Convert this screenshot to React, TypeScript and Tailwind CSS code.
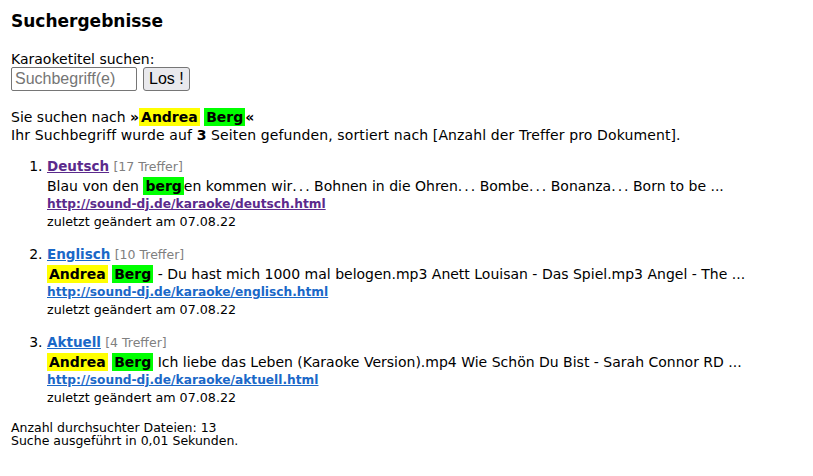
const Y = ({ children }: { children: React.ReactNode }) => (
  <span className="bg-[#ffff00] px-[2px] py-[1px] font-bold">{children}</span>
);
const G = ({ children }: { children: React.ReactNode }) => (
  <span className="bg-[#00ff00] px-[2px] py-[1px] font-bold">{children}</span>
);
// the source font sets its periods wider apart
const Dots = () => (
  <>
    <span className="tracking-[2px]">..</span>.
  </>
);

const results = [
  {
    title: "Deutsch",
    hits: 17,
    visited: true,
    url: "http://sound-dj.de/karaoke/deutsch.html",
    snippet: (
      <>
        Blau von den <G>berg</G>en kommen wir<Dots /> Bohnen in die Ohren<Dots /> Bombe<Dots /> Bonanza<Dots /> Born to be ...
      </>
    ),
  },
  {
    title: "Englisch",
    hits: 10,
    visited: false,
    url: "http://sound-dj.de/karaoke/englisch.html",
    snippet: (
      <>
        <Y>Andrea</Y> <G>Berg</G> - Du hast mich 1000 mal belogen.mp3 Anett Louisan - Das Spiel.mp3 Angel - The ...
      </>
    ),
  },
  {
    title: "Aktuell",
    hits: 4,
    visited: false,
    url: "http://sound-dj.de/karaoke/aktuell.html",
    snippet: (
      <>
        <Y>Andrea</Y> <G>Berg</G> Ich liebe das Leben (Karaoke Version).mp4 Wie Schön Du Bist - Sarah Connor RD ...
      </>
    ),
  },
];

export default function App() {
  return (
    <div className="min-h-screen bg-white px-[11px] pt-[11px] font-['DejaVu_Sans',sans-serif] text-[14px] leading-[18px] text-black">
      <h2 className="mb-[18px] text-[17px] font-bold leading-[21px]">Suchergebnisse</h2>

      <div>Karaoketitel suchen:</div>
      <div className="mt-[-1px] flex items-center gap-[6px]">
        <input
          type="text"
          placeholder="Suchbegriff(e)"
          className="h-[24px] w-[126px] rounded-[2px] border border-[#767676] px-[3px] font-['Liberation_Sans',sans-serif] text-[16px] text-black placeholder:text-[#757575]"
        />
        <button className="h-[24px] rounded-[3px] border border-[#767676] bg-[#e9e9ed] px-[5px] font-['Liberation_Sans',sans-serif] text-[16px]">
          Los !
        </button>
      </div>

      <div className="mt-[17px]">
        Sie suchen nach <b>»</b>
        <Y>Andrea</Y> <G>Berg</G>
        <b>«</b>
      </div>
      <div className="tracking-[0.12px]">
        Ihr Suchbegriff wurde auf <b>3</b> Seiten gefunden, sortiert nach [Anzahl der Treffer pro Dokument].
      </div>

      <ol className="mt-[12px] list-decimal pl-[36px]">
        {results.map((r) => (
          <li key={r.title} className="mb-[13px]">
            <div className="text-[13.5px] leading-[20px]">
              <a
                href="#"
                className={`font-bold underline ${r.visited ? "text-[#5b2a8c]" : "text-[#1a68c8]"}`}
              >
                {r.title}
              </a>{" "}
              <span className="text-[12.5px] text-[#808080]">[{r.hits} Treffer]</span>
            </div>
            <div>{r.snippet}</div>
            <div className="text-[12.2px] leading-[18px]">
              <a
                href="#"
                className={`font-bold underline ${r.visited ? "text-[#5b2a8c]" : "text-[#1a68c8]"}`}
              >
                {r.url}
              </a>
            </div>
            <div className="text-[12.7px] leading-[18px]">zuletzt geändert am 07.08.22</div>
          </li>
        ))}
      </ol>

      <div className="mt-[14px] text-[12.5px] leading-[13px]">
        <div>Anzahl durchsuchter Dateien: 13</div>
        <div>Suche ausgeführt in 0,01 Sekunden.</div>
      </div>
    </div>
  );
}
